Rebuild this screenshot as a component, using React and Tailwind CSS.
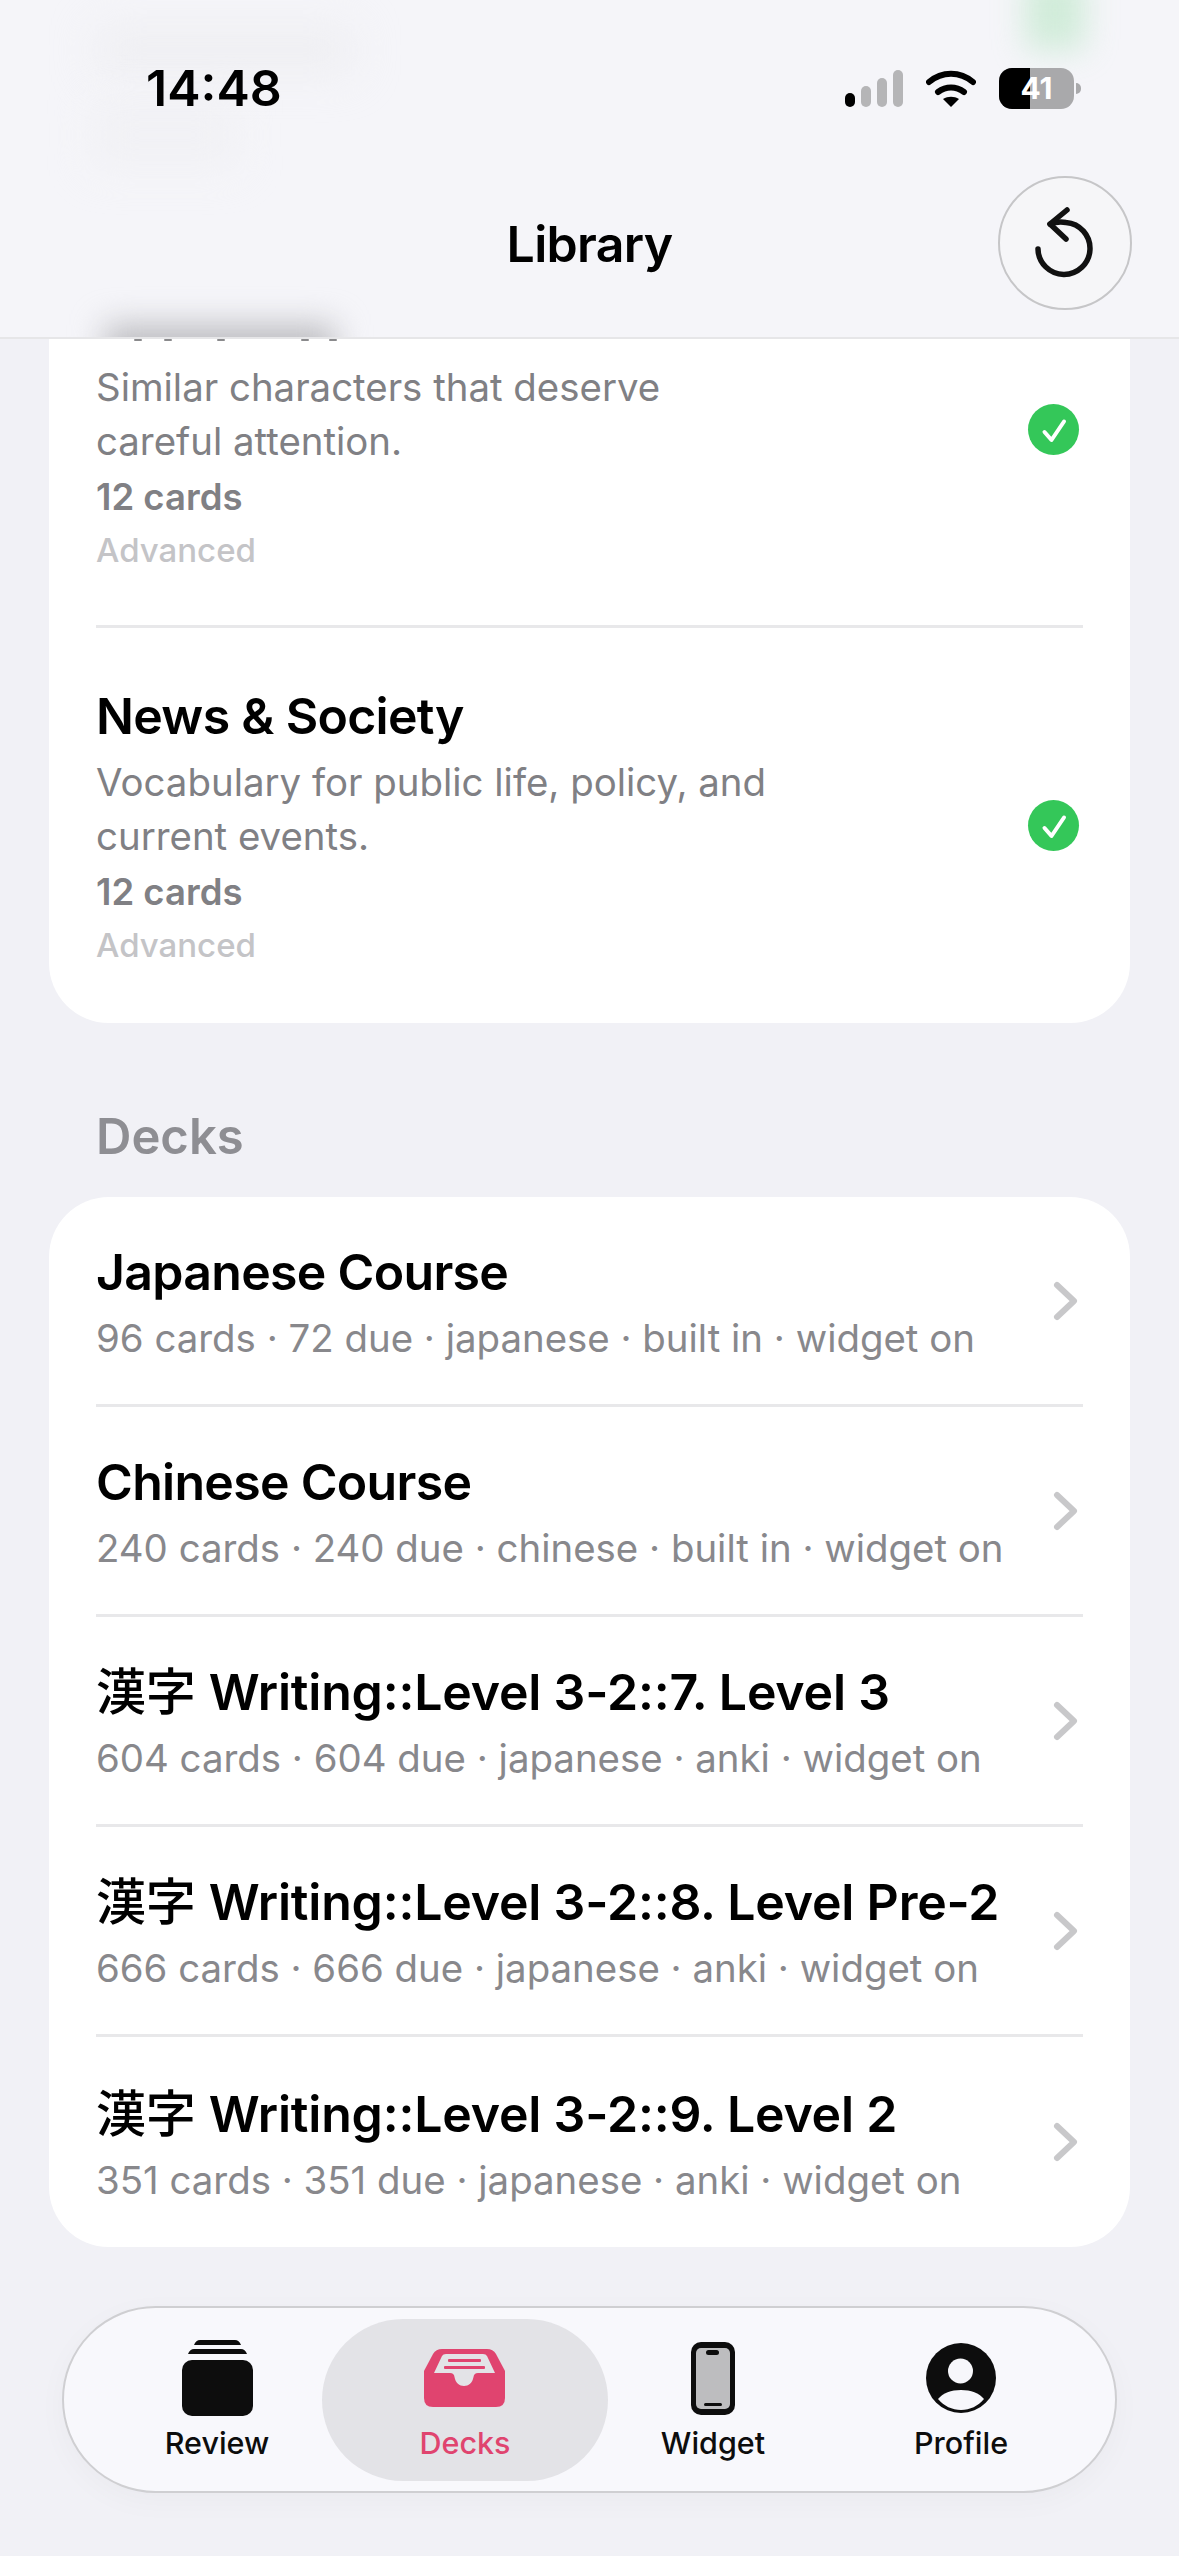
const FONT = "font-['Inter','Noto_Sans_CJK_JP',sans-serif]";

const DECKS = [
  { name: 'Japanese Course', meta: '96 cards · 72 due · japanese · built in · widget on' },
  { name: 'Chinese Course', meta: '240 cards · 240 due · chinese · built in · widget on' },
  { kanji: true, name: 'Writing::Level 3-2::7. Level 3', meta: '604 cards · 604 due · japanese · anki · widget on' },
  { kanji: true, name: 'Writing::Level 3-2::8. Level Pre-2', meta: '666 cards · 666 due · japanese · anki · widget on' },
  { kanji: true, name: 'Writing::Level 3-2::9. Level 2', meta: '351 cards · 351 due · japanese · anki · widget on' },
];

function CheckBadge() {
  return (
    <div className="w-[51px] h-[51px] rounded-full bg-[#34c759] flex items-center justify-center shrink-0">
      <svg width="30" height="30" viewBox="0 0 30 30" fill="none" stroke="white" strokeWidth="4" strokeLinecap="round" strokeLinejoin="round">
        <polyline points="5.5 17 12.5 25 25 6.5" />
      </svg>
    </div>
  );
}

function PackRow({ title, desc, divider }) {
  return (
    <div className={`mx-[47px] flex items-center ${divider ? 'h-[394px] border-b-[3px] border-[#e8e8ea]' : 'h-[395px]'}`}>
      <div className={`flex-1 self-start ${title ? 'pt-[58px]' : 'pt-[126px]'}`}>
        {title && <div className="text-[50px] leading-[60px] font-semibold text-black mb-[9px] tracking-[-0.7px]">{title}</div>}
        <div className="text-[38.4px] leading-[54px] text-[#808084]">
          {desc[0]}
          <br />
          {desc[1]}
        </div>
        <div className="text-[36.5px] leading-[58px] font-semibold text-[#808084]">12 cards</div>
        <div className="text-[33px] leading-[48px] font-medium text-[#c4c4c7]">Advanced</div>
      </div>
      <div className="mr-[4px]">
        <CheckBadge />
      </div>
    </div>
  );
}

function DeckRow({ deck, last }) {
  return (
    <div className={`mx-[47px] h-[210px] flex items-center ${last ? '' : 'border-b-[3px] border-[#e8e8ea]'}`}>
      <div className="flex-1 min-w-0 pt-[3px]">
        <div className={`text-[50px] leading-[62px] font-semibold text-black whitespace-nowrap ${deck.kanji ? 'tracking-[-0.2px]' : 'tracking-[-0.7px]'}`}>
          {deck.kanji && <span className="font-medium">漢字 </span>}
          {deck.name}
        </div>
        <div className="text-[38.4px] leading-[50px] mt-[10px] text-[#88888c] whitespace-nowrap">{deck.meta}</div>
      </div>
      <svg width="30" height="42" viewBox="0 0 30 42" fill="none" stroke="#c8c8ca" strokeWidth="6" strokeLinecap="round" strokeLinejoin="round" className="mr-[1px] shrink-0">
        <polyline points="5 5 22 21 5 37" />
      </svg>
    </div>
  );
}

function ReviewIcon() {
  return (
    <svg width="71" height="76" viewBox="0 0 71 76">
      <path d="M18 0h35q4 0 6 5H12q2-5 6-5z" fill="#0d0d0d" />
      <path d="M12 9h47q4 0 6 5H6q2-5 6-5z" fill="#0d0d0d" />
      <rect x="0" y="20" width="71" height="56" rx="10" fill="#0d0d0d" />
    </svg>
  );
}

function DecksIcon() {
  return (
    <svg width="81" height="58" viewBox="0 0 81 58">
      <path d="M18 0h45q6 0 9 5l9 17v27q0 9-9 9H9q-9 0-9-9V22L9 5q3-5 9-5z" fill="#e0446f" />
      <path d="M22 5h37q3 0 4 2l8 17H54q-4 0-4.500 4c-1 6-5 9-9.500 9s-8.500-3-9.500-9q-.5-4-4.500-4H10l8-17q1-2 4-2z" fill="#e3e3e7" />
      <rect x="24" y="10" width="33" height="3" rx="1" fill="#e0446f" />
      <rect x="20" y="17" width="41" height="3" rx="1" fill="#e0446f" />
    </svg>
  );
}

function WidgetIcon() {
  return (
    <svg width="44" height="73" viewBox="0 0 44 73">
      <rect x="0" y="0" width="44" height="73" rx="10" fill="#0d0d0d" />
      <rect x="5" y="6" width="34" height="61" rx="5" fill="#bdbdbf" />
      <rect x="15" y="8" width="13" height="5" rx="2.500" fill="#0d0d0d" />
      <rect x="13" y="61" width="18" height="3" rx="1.500" fill="#0d0d0d" />
    </svg>
  );
}

function ProfileIcon() {
  return (
    <svg width="70" height="70" viewBox="0 0 70 70">
      <circle cx="35" cy="35" r="35" fill="#0d0d0d" />
      <circle cx="34.500" cy="28" r="12.500" fill="#f7f7fb" />
      <path d="M12 56C17 50 25 47 35 47S53 50 58 56C52 63 44 67 35 67S18 63 12 56z" fill="#f7f7fb" />
    </svg>
  );
}

function TabItem({ icon, label, active }) {
  return (
    <div className={`flex flex-col items-center ${active ? 'text-[#e0446f]' : 'text-[#0d0d0d]'}`}>
      <div className="h-[80px] flex items-center justify-center">{icon}</div>
      <div className="text-[30.5px] leading-[36px] font-medium mt-[7px]">{label}</div>
    </div>
  );
}

export default function App() {
  return (
    <div className={`relative w-[1179px] h-[2556px] overflow-hidden bg-[#f1f1f6] ${FONT}`}>
      {/* Header with frosted scroll residue */}
      <header className="relative z-10 h-[339px] bg-[#f5f5f9] border-b-2 border-[#e6e6e8] overflow-hidden">
        <div className="absolute left-[95px] top-[25px] w-[260px] h-[50px] bg-[#e9e9ec] blur-[22px] opacity-50" />
        <div className="absolute left-[90px] top-[100px] w-[150px] h-[70px] bg-[#eeeef1] blur-[20px] opacity-50" />
        <div className="absolute left-[1025px] top-[-30px] w-[60px] h-[80px] bg-[#b8e6c4] blur-[16px] opacity-60" />
        <div className="absolute left-[105px] top-[325px] w-[230px] h-[50px] bg-[#bcbcc0] blur-[16px]" />

        <div className="relative flex items-center justify-between pl-[146px] pr-[98px] pt-[60px] h-[116px]">
          <span className="text-[50px] leading-[56px] font-semibold text-black">14:48</span>
          <div className="flex items-center gap-[23px]">
            <svg width="58" height="37" viewBox="0 0 58 37">
              <rect x="0" y="23" width="10" height="14" rx="5" fill="#000" />
              <rect x="16" y="16" width="10" height="21" rx="5" fill="#b5b5b7" />
              <rect x="32" y="8" width="10" height="29" rx="5" fill="#b5b5b7" />
              <rect x="48" y="0" width="10" height="37" rx="5" fill="#b5b5b7" />
            </svg>
            <svg width="50" height="37" viewBox="0 0 50 37" fill="none" stroke="#000" strokeWidth="6" strokeLinecap="round">
              <path d="M3 12C16 1 34 1 47 12" />
              <path d="M12 22c8-6 18-6 26 0" />
              <path d="M25 37l-8-8c5-3 11-3 16 0z" fill="#000" stroke="none" />
            </svg>
            <div className="flex items-center gap-[2px]">
              <div className="relative w-[75px] h-[41px] rounded-[13px] overflow-hidden bg-[#a9a9ab] flex items-center justify-center">
                <div className="absolute left-0 top-0 bottom-0 w-[31px] bg-black" />
                <span className="relative text-[30px] font-bold text-white leading-none">41</span>
              </div>
              <div className="w-[5px] h-[11px] rounded-r-full bg-[#a9a9ab]" />
            </div>
          </div>
        </div>

        <div className="relative flex items-center justify-center h-[96px] mt-[80px] text-[50px] font-semibold tracking-[-0.7px] text-black">
          Library
          <button className="absolute right-[47px] top-[-20px] w-[134px] h-[134px] rounded-full border-2 border-[#c6c6c8] bg-[#f6f6f8] flex items-center justify-center">
            <svg width="70" height="82" viewBox="0 0 70 82" fill="none" stroke="#111" strokeWidth="5.500" strokeLinecap="round" strokeLinejoin="round">
              <path d="M8 47A26 26 0 1 0 36 20.500Q28 19 20 22" />
              <path d="M37 8L20 22l16 15" />
            </svg>
          </button>
        </div>
      </header>

      <main className="px-[49px]">
        {/* Collections card, its top row scrolled under the header */}
        <section className="relative bg-white rounded-[60px] -mt-[105px]">
          <PackRow desc={['Similar characters that deserve', 'careful attention.']} divider />
          <PackRow title="News &amp; Society" desc={['Vocabulary for public life, policy, and', 'current events.']} />
        </section>

        <h2 className="ml-[47px] mt-[86px] text-[49px] leading-[56px] font-semibold text-[#8e8e93]">Decks</h2>

        <section className="bg-white rounded-[60px] mt-[32px] h-[1050px]">
          {DECKS.map((deck, i) => (
            <DeckRow key={deck.name} deck={deck} last={i === DECKS.length - 1} />
          ))}
        </section>
      </main>

      {/* Descender specks of the hidden title, peeking under the header line */}
      <svg width="260" height="3" viewBox="0 0 260 3" className="absolute left-[95px] top-[339px] z-20">
        <rect x="39" y="0" width="8" height="2" rx="1" fill="#8a8a8c" />
        <rect x="69" y="0" width="8" height="2" rx="1" fill="#8a8a8c" />
        <rect x="122" y="0" width="8" height="2" rx="1" fill="#8a8a8c" />
        <rect x="206" y="0" width="8" height="2" rx="1" fill="#8a8a8c" />
        <rect x="234" y="0" width="8" height="2" rx="1" fill="#8a8a8c" />
      </svg>

      {/* Floating tab bar */}
      <nav className="absolute left-[62px] top-[2306px] w-[1055px] h-[187px] rounded-full bg-[#f8f8fc] border-2 border-[#cfcfd2] grid grid-cols-4 items-center pl-[29px] pr-[30px] shadow-[0_8px_30px_rgba(0,0,0,0.03)]">
        <TabItem icon={<ReviewIcon />} label="Review" />
        <div className="-mx-[19px] h-[162px] rounded-full bg-[#e3e3e7] flex items-center justify-center">
          <TabItem icon={<DecksIcon />} label="Decks" active />
        </div>
        <TabItem icon={<WidgetIcon />} label="Widget" />
        <TabItem icon={<ProfileIcon />} label="Profile" />
      </nav>
    </div>
  );
}
